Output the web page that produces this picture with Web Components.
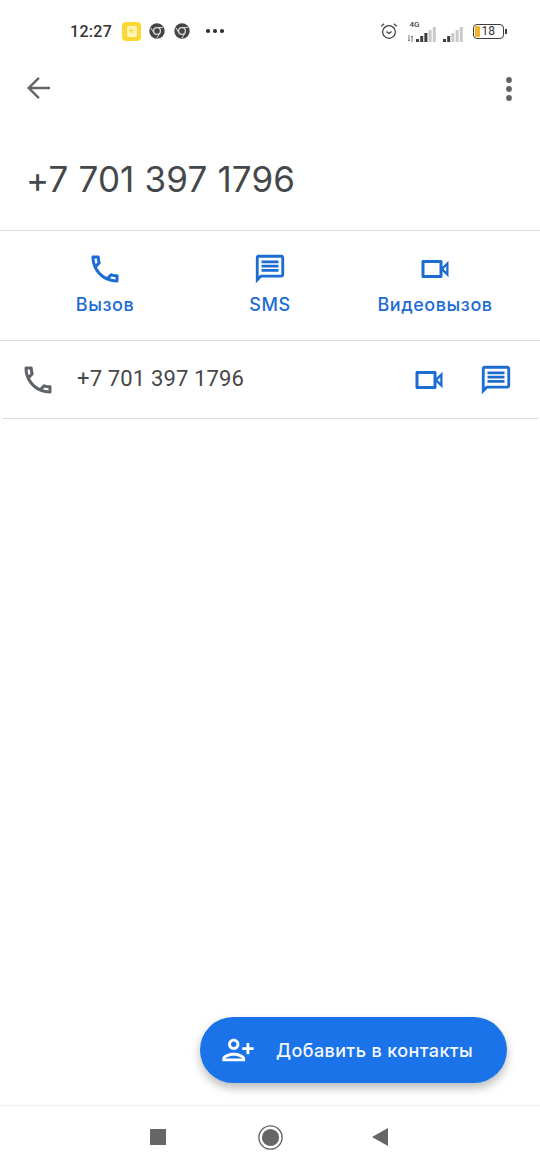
<!DOCTYPE html>
<html lang="ru">
<head>
<meta charset="utf-8">
<title>Номер</title>
<style>
    html, body { margin: 0; padding: 0; background: #fff; }
    body { font-family: Roboto, "Liberation Sans", sans-serif; }
</style>
</head>
<body>
<call-screen>
    <status-bar slot="top"></status-bar>
    <top-toolbar slot="top"></top-toolbar>
    <number-title slot="top">+7 701 397 1796</number-title>
    <action-bar slot="top">
        <call-action label="Вызов" icon="phone"></call-action>
        <call-action label="SMS" icon="message"></call-action>
        <call-action label="Видеовызов" icon="video"></call-action>
    </action-bar>
    <number-row slot="top">+7 701 397 1796</number-row>
    <add-contact-button slot="fab">Добавить в контакты</add-contact-button>
    <nav-bar slot="bottom"></nav-bar>
</call-screen>

<script>
(() => {

    const PATHS = {
        phone: 'M6.54 5c.06.89.21 1.76.45 2.59l-1.2 1.2c-.41-1.2-.67-2.47-.76-3.79h1.51m9.86 12.02c.85.24 1.72.39 2.6.45v1.49c-1.32-.09-2.59-.35-3.8-.75l1.2-1.19M7.5 3H4c-.55 0-1 .45-1 1 0 9.39 7.61 17 17 17 .55 0 1-.45 1-1v-3.49c0-.55-.45-1-1-1-1.24 0-2.45-.2-3.57-.57-.1-.04-.21-.05-.31-.05-.26 0-.51.1-.71.29l-2.2 2.2c-2.83-1.45-5.15-3.76-6.59-6.59l2.2-2.2c.28-.28.36-.67.25-1.02C8.7 6.45 8.5 5.25 8.5 4c0-.55-.45-1-1-1z',
        video: 'M15 8v8H5V8h10m1-2H4c-.55 0-1 .45-1 1v10c0 .55.45 1 1 1h12c.55 0 1-.45 1-1v-3.5l4 4v-11l-4 4V7c0-.55-.45-1-1-1zM19.5 10.2v3.6L17.7 12z',
        message: 'M20 2H4c-1.1 0-1.99.9-1.99 2L2 22l4-4h14c1.1 0 2-.9 2-2V4c0-1.1-.9-2-2-2zm0 14H5.17L4 17.17V4h16v12zM6 12h12v2H6zm0-3h12v2H6zm0-3h12v2H6z',
        person: 'M15 12c2.21 0 4-1.79 4-4s-1.79-4-4-4-4 1.79-4 4 1.79 4 4 4zm0-6c1.1 0 2 .9 2 2s-.9 2-2 2-2-.9-2-2 .9-2 2-2zm0 8c-2.67 0-8 1.34-8 4v2h16v-2c0-2.66-5.33-4-8-4zm-6 4c.22-.72 3.31-2 6-2 2.7 0 5.8 1.29 6 2H9zm-3-3v-3h3v-2H6V7H4v3H1v2h3v3h2z'
    };

    const BLUE = '#1c6cd3';

    const icon = (name, color, extra = '') => {
        // the message glyph is drawn a bit smaller than the others
        const size = name === 'message' ? 34 : 36;
        return `<svg width="${size}" height="${size}" viewBox="0 0 24 24" fill="${color}" fill-rule="evenodd" ${extra}><path d="${PATHS[name]}"/></svg>`;
    };

    class Base extends HTMLElement {
        constructor(html) {
            super();
            this.attachShadow({mode: 'open'});
            this.shadowRoot.innerHTML = html;
        }
    }

    customElements.define('call-screen', class extends Base {
        constructor() {
            super(`
                <style>
                    :host { display: flex; flex-direction: column; position: relative; width: 540px; height: 1170px; overflow: hidden; background: #fff; }
                    main { flex: 1; }
                    .fab { position: absolute; left: 200px; top: 1017px; }
                </style>
                <main><slot name="top"></slot></main>
                <div class="fab"><slot name="fab"></slot></div>
                <slot name="bottom"></slot>
            `);
        }
    });

    const chrome = `<svg width="16" height="16" viewBox="0 0 16 16">
        <circle cx="8" cy="8" r="7.7" fill="#444"/>
        <circle cx="8" cy="8" r="3.4" fill="none" stroke="#d8d8d8" stroke-width="1.3"/>
        <path d="M8 4.4h6M11 9.8 8 15M4.8 9.8 1.8 4.8" stroke="#d8d8d8" stroke-width="1" fill="none"/>
    </svg>`;

    const bars = (levels) => `<svg width="20" height="15" viewBox="0 0 20 15">${
        [0, 1, 2, 3, 4].map(i => {
            const h = 3 + i * 3;
            return `<rect x="${i * 4.2}" y="${15 - h}" width="3" height="${h}" fill="${i < levels ? '#3d3d3d' : '#c9c9c9'}"/>`;
        }).join('')
    }</svg>`;

    customElements.define('status-bar', class extends Base {
        constructor() {
            super(`
                <style>
                    :host { display: flex; align-items: center; box-sizing: border-box; height: 60px; padding: 2px 33px 0 70px; color: #333; }
                    .time { font: 500 16px Roboto, sans-serif; letter-spacing: .3px; width: 52px; }
                    .note { display: flex; align-items: center; justify-content: center; width: 19px; height: 19px; margin-right: 8px; border-radius: 4px; background: #fdd835; }
                    .note i { display: flex; align-items: center; justify-content: center; width: 10px; height: 11px; border-radius: 2px; background: #fff3b8; color: #fdd835; font: 700 9px/1 Roboto, sans-serif; }
                    .chrome { display: flex; margin-right: 9px; }
                    .more { display: flex; gap: 3.5px; margin-left: 7px; }
                    .more i { width: 3.5px; height: 3.5px; border-radius: 50%; background: #333; }
                    .right { display: flex; align-items: center; margin-left: auto; }
                    .alarm { display: block; margin-right: 9px; }
                    .net { position: relative; display: flex; align-items: flex-end; box-sizing: border-box; height: 18px; width: 30px; padding-left: 9px; margin-top: 3px; }
                    .net span { position: absolute; left: 3px; top: -4px; font: 500 8px Roboto, sans-serif; color: #444; }
                    .net svg.io { position: absolute; left: 0; bottom: 0; }
                    .signal2 { margin-left: 6px; display: flex; align-items: flex-end; height: 18px; margin-top: 3px; }
                    .battery { display: flex; align-items: center; margin-left: 10px; }
                    .cell { box-sizing: border-box; display: flex; align-items: center; width: 31px; height: 15px; border: 1.5px solid #3d3d3d; border-radius: 4px; padding: 1px; }
                    .cell b { width: 5px; height: 100%; background: #f0b429; border-radius: 1px; }
                    .cell span { font: 400 12px Roboto, sans-serif; margin-left: 2px; color: #333; line-height: 1; }
                    .nub { width: 2px; height: 5px; margin-left: 1.5px; background: #3d3d3d; }
                </style>
                <span class="time">12:27</span>
                <span class="note"><i>+</i></span>
                <span class="chrome">${chrome}</span>
                <span class="chrome">${chrome}</span>
                <span class="more"><i></i><i></i><i></i></span>
                <div class="right">
                    <svg class="alarm" width="18" height="18" viewBox="0 0 19 19" fill="none" stroke="#3d3d3d" stroke-width="1.3">
                        <circle cx="9.5" cy="10.5" r="6.7"/>
                        <path d="M6.8 10 9.5 12.2 12.2 10M1.2 4.6 4.4 1.8M17.8 4.6 14.6 1.8"/>
                    </svg>
                    <div class="net">
                        <span>4G</span>
                        <svg class="io" width="7" height="7" viewBox="0 0 7 7" stroke="#777" stroke-width="1" fill="none"><path d="M2 0v6M1 5l1 1 1-1M5 7V1M4 2l1-1 1 1"/></svg>
                        ${bars(3)}
                    </div>
                    <div class="signal2">${bars(2)}</div>
                    <div class="battery"><div class="cell"><b></b><span>18</span></div><div class="nub"></div></div>
                </div>
            `);
        }
    });

    customElements.define('top-toolbar', class extends Base {
        constructor() {
            super(`
                <style>
                    :host { display: flex; align-items: center; justify-content: space-between; box-sizing: border-box; height: 56px; padding: 0 13px 0 20px; }
                    svg { display: block; }
                </style>
                <svg width="36" height="36" viewBox="0 0 24 24" fill="none" stroke="#5f6368" stroke-width="1.6">
                    <path d="M20 12H6M12.6 5.2 5.8 12l6.8 6.8"/>
                </svg>
                <svg width="36" height="36" viewBox="0 0 36 36" fill="#5f6368">
                    <circle cx="18" cy="10" r="2.9"/><circle cx="18" cy="19" r="2.9"/><circle cx="18" cy="28" r="2.9"/>
                </svg>
            `);
        }
    });

    customElements.define('number-title', class extends Base {
        constructor() {
            super(`
                <style>
                    :host { display: block; box-sizing: border-box; height: 115px; padding: 40px 0 0 26px; border-bottom: 1px solid #dadce0; color: #45484b; font: 400 35px/46px Inter, Roboto, sans-serif; letter-spacing: .15px; }
                </style>
                <slot></slot>
            `);
        }
    });

    customElements.define('action-bar', class extends Base {
        constructor() {
            super(`
                <style>
                    :host { display: grid; grid-template-columns: repeat(3, 165px); box-sizing: border-box; height: 110px; padding: 20px 22.5px 0; border-bottom: 1px solid #dadce0; }
                </style>
                <slot></slot>
            `);
        }
    });

    customElements.define('call-action', class extends Base {
        constructor() {
            super(`
                <style>
                    :host { display: flex; flex-direction: column; align-items: center; color: ${BLUE}; font: 500 18px/24px Inter, Roboto, sans-serif; letter-spacing: .55px; }
                    #icon { display: flex; align-items: center; height: 36px; margin-bottom: 6px; }
                    svg { display: block; }
                </style>
                <span id="icon"></span>
                <span id="label"></span>
            `);
        }
        connectedCallback() {
            this.shadowRoot.getElementById('icon').innerHTML = icon(this.getAttribute('icon'), BLUE);
            this.shadowRoot.getElementById('label').textContent = this.getAttribute('label');
        }
    });

    customElements.define('number-row', class extends Base {
        constructor() {
            super(`
                <style>
                    :host { display: flex; align-items: center; box-sizing: border-box; height: 78px; margin: 0 2px; padding: 0 25px 0 18px; border-bottom: 1px solid #dadce0; color: #45484b; font: 400 22px Roboto, sans-serif; letter-spacing: .15px; }
                    .text { flex: 1; margin: -2px 0 0 21px; }
                    svg { display: block; }
                    .video { margin-right: 32px; }
                </style>
                ${icon('phone', '#5f6368')}
                <span class="text"><slot></slot></span>
                ${icon('video', BLUE, 'class="video"')}
                ${icon('message', BLUE)}
            `);
        }
    });

    customElements.define('add-contact-button', class extends Base {
        constructor() {
            super(`
                <style>
                    :host { display: flex; align-items: center; box-sizing: border-box; width: 307px; height: 66px; padding-left: 21px; border-radius: 33px; background: #1a73e8; color: #f4f8fe; font: 500 18px Inter, Roboto, sans-serif; letter-spacing: .4px; box-shadow: 0 5px 10px rgba(60, 64, 67, .35); }
                    svg { display: block; transform: scaleX(-1); margin-right: 21px; }
                </style>
                <svg width="34" height="34" viewBox="0 0 24 24" fill="#fff"><path d="${PATHS.person}"/></svg>
                <slot></slot>
            `);
        }
    });

    customElements.define('nav-bar', class extends Base {
        constructor() {
            super(`
                <style>
                    :host { display: flex; align-items: center; box-sizing: border-box; height: 65px; padding: 0 0 2px 150px; border-top: 1px solid #f0f0f0; }
                    .stop { width: 16px; height: 16px; background: #666; margin-right: 92px; }
                    svg { display: block; }
                    .home { margin-right: 89px; }
                </style>
                <span class="stop"></span>
                <svg class="home" width="25" height="25" viewBox="0 0 25 25">
                    <circle cx="12.5" cy="12.5" r="11.6" fill="none" stroke="#666" stroke-width="1.4"/>
                    <circle cx="12.5" cy="12.5" r="8.6" fill="#666"/>
                </svg>
                <svg width="16" height="18" viewBox="0 0 16 18"><path d="M0 9 16 0v18z" fill="#666"/></svg>
            `);
        }
    });

})();
</script>
</body>
</html>
